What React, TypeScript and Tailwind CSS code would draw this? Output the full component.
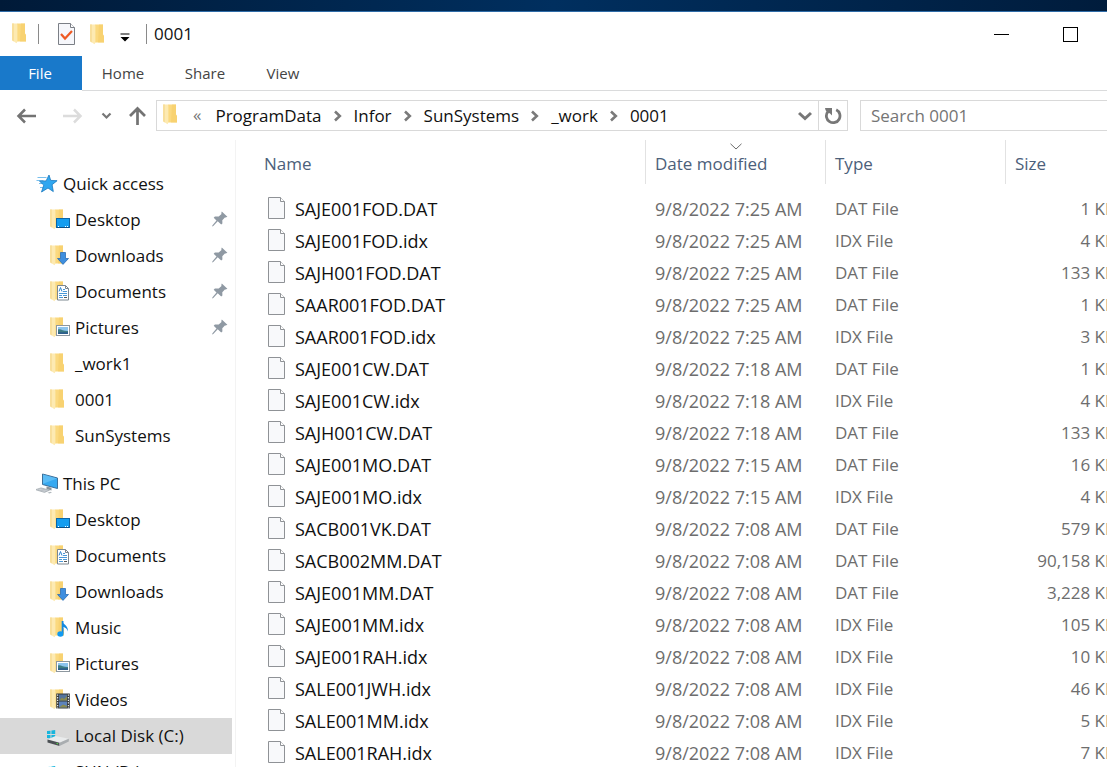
import type { ReactNode } from 'react';

type FileRow = { name: string; date: string; size: string };

const files: FileRow[] = [
  { name: 'SAJE001FOD.DAT', date: '9/8/2022 7:25 AM', size: '1 KB' },
  { name: 'SAJE001FOD.idx', date: '9/8/2022 7:25 AM', size: '4 KB' },
  { name: 'SAJH001FOD.DAT', date: '9/8/2022 7:25 AM', size: '133 KB' },
  { name: 'SAAR001FOD.DAT', date: '9/8/2022 7:25 AM', size: '1 KB' },
  { name: 'SAAR001FOD.idx', date: '9/8/2022 7:25 AM', size: '3 KB' },
  { name: 'SAJE001CW.DAT', date: '9/8/2022 7:18 AM', size: '1 KB' },
  { name: 'SAJE001CW.idx', date: '9/8/2022 7:18 AM', size: '4 KB' },
  { name: 'SAJH001CW.DAT', date: '9/8/2022 7:18 AM', size: '133 KB' },
  { name: 'SAJE001MO.DAT', date: '9/8/2022 7:15 AM', size: '16 KB' },
  { name: 'SAJE001MO.idx', date: '9/8/2022 7:15 AM', size: '4 KB' },
  { name: 'SACB001VK.DAT', date: '9/8/2022 7:08 AM', size: '579 KB' },
  { name: 'SACB002MM.DAT', date: '9/8/2022 7:08 AM', size: '90,158 KB' },
  { name: 'SAJE001MM.DAT', date: '9/8/2022 7:08 AM', size: '3,228 KB' },
  { name: 'SAJE001MM.idx', date: '9/8/2022 7:08 AM', size: '105 KB' },
  { name: 'SAJE001RAH.idx', date: '9/8/2022 7:08 AM', size: '10 KB' },
  { name: 'SALE001JWH.idx', date: '9/8/2022 7:08 AM', size: '46 KB' },
  { name: 'SALE001MM.idx', date: '9/8/2022 7:08 AM', size: '5 KB' },
  { name: 'SALE001RAH.idx', date: '9/8/2022 7:08 AM', size: '7 KB' },
];

function FolderShape() {
  return (
    <>
      <path d="M5 0.5h8v10l1 1.6v6.4H5z" fill="#fbd97f" />
      <path d="M9 .5h4v10l1 1.6v6.4H8z" fill="#f6cd68" opacity=".6" />
      <path d="M0 .5h5l.4 1.2v16.8l-.8 1.7L0 17.2z" fill="#fdeab2" />
      <path d="M0 .5h2v17.900L0 17.200z" fill="#f8df9c" />
    </>
  );
}

function Folder({ children }: { children?: ReactNode }) {
  return (
    <svg width="22" height="22" viewBox="0 0 22 22" aria-hidden="true" className="shrink-0">
      <FolderShape />
      {children}
    </svg>
  );
}

const DesktopIcon = () => (
  <Folder>
    <rect x="6.5" y="9.5" width="13" height="9" fill="#139df0" stroke="#0b66a8" />
    <path d="M7 18.5h12" stroke="#0a4f86" />
    <path d="M8 17.5h1M15 17.5h1M17 17.5h1" stroke="#fff" />
  </Folder>
);
const DownloadsIcon = () => (
  <Folder>
    <path d="M10.500 7.500h5v6h3L13 19.400 7.500 13.500h3z" fill="#3f8fdf" stroke="#2d6fb5" strokeWidth=".8" />
  </Folder>
);
const DocumentsIcon = () => (
  <Folder>
    <path d="M7.500 4.500h8l3 3v11.500h-11z" fill="#fff" stroke="#7c8790" />
    <path d="M15.500 4.500v3h3" fill="none" stroke="#7c8790" />
    <path d="M9 10.500l1.500-4 1.500 4" fill="none" stroke="#2f86cf" />
    <path d="M13 8.500h2M13 10.500h4M9 12.500h8M9 14.500h3M13 14.500h4M9 16.500h4" stroke="#4b98d6" />
    <path d="M14 16.500h3" stroke="#555" />
  </Folder>
);
const PicturesIcon = () => (
  <Folder>
    <rect x="6.500" y="8.500" width="13" height="10" fill="#fff" stroke="#8d979f" />
    <rect x="8" y="10" width="10" height="7" fill="#8cc4ee" />
    <path d="M8 12.500c3-.8 5 1.800 10 1.600V17H8z" fill="#3d7c83" />
    <path d="M8 15.500c3-.8 6 .2 10-.4V17H8z" fill="#2d5e8c" />
  </Folder>
);
const MusicIcon = () => (
  <Folder>
    <path d="M12.600 4v12.500" stroke="#1389e0" strokeWidth="1.800" />
    <path d="M12 4c.8 3.400 6.800 4.600 5.800 10.600-.3-2.600-2.600-4.400-5.800-5z" fill="#1389e0" />
    <ellipse cx="10.400" cy="17" rx="3.100" ry="2.800" fill="#119af2" />
  </Folder>
);
const VideosIcon = () => (
  <Folder>
    <rect x="6.300" y="4.500" width="13.500" height="15" fill="#34383d" />
    <rect x="9" y="5.500" width="8" height="6" fill="#55749c" />
    <rect x="9" y="12.500" width="8" height="6" fill="#5d83bb" />
    <path d="M9 11.500l3-3 2 1.500 3-3v4.500zM9 18.500l4-3 4 1.500v1.500z" fill="#8a8b50" />
    <path d="M7.600 5.500v14M18.400 5.500v14" stroke="#e9edf0" strokeWidth="1.200" strokeDasharray="1.300 1.300" />
  </Folder>
);
const DiskIcon = () => (
  <svg width="28" height="22" viewBox="0 0 28 22" aria-hidden="true" className="shrink-0">
    <path d="M0 6.100l3.500-.4v3.300H0zM4.400 5.600l3.800-.5V9H4.400zM0 9.900h3.500v3.500L0 13zM4.400 9.900h3.800V14l-3.800-.5z" fill="#17b5dd" />
    <path d="M.5 14.600L8.500 11l13.300 2.700-9.300 4z" fill="#e9ebec" />
    <path d="M.5 14.600l12 3.100v3.300L.5 17.500z" fill="#4b5054" />
    <path d="M12.500 17.700l9.300-4v2.900L12.500 21z" fill="#a9adb0" />
    <path d="M9.500 18.400l1.600.4" stroke="#5ae04a" />
  </svg>
);
const StarIcon = () => (
  <svg width="23" height="22" viewBox="0 0 23 22" aria-hidden="true" className="shrink-0">
    <path d="M1.500 4.500h9M.5 7.500h7M3 10.500h6M4 14.500h4" stroke="#55aee8" strokeWidth=".8" />
    <path d="M13 2l1.700 5.400 6.400.3-5 4 1.200 6.900-5.300-3.600-6.500 4 2.300-6.900-4.300-3.900 6.600-.3z" fill="#2fa7f0" stroke="#1877be" strokeWidth=".8" />
  </svg>
);
const PcIcon = () => (
  <svg width="24" height="22" viewBox="0 0 24 22" aria-hidden="true" className="shrink-0">
    <path d="M6.500 1l15 4v10.500L6.500 11.500z" fill="#37a9f0" stroke="#3d6f99" />
    <path d="M7 1.600l14 3.800-14 5.400z" fill="#6cc4f7" opacity=".7" />
    <path d="M10.500 13.400l5 1.400v2.600l-5-1.400z" fill="#8b959c" />
    <path d="M-.5 16.700l5.500-1.800 8.500 2.300-5 2.200z" fill="#d6dade" stroke="#9aa2a8" strokeWidth=".7" />
    <path d="M2 16.700l8 1.700M4.500 15.700l7 1.700" stroke="#a3aab0" strokeWidth=".6" />
    <path d="M11.500 19.800l2.800-1 1.700.6-2.600 1.200z" fill="#b1b8bd" />
  </svg>
);

function Pin() {
  return (
    <svg width="16" height="16" viewBox="0 0 16 16" aria-hidden="true" className="mb-0.5">
      <path d="M9.800.6l5.600 5.200-1.700.8-.8-.2-2.600 2.800.1 3.200-1.200 1.200-3.500-3.300-4.400 4.600L0 15.400l.5-1.100 4-4.700L1.700 6.800l1.200-1.200 3.800-.1 2.800-2.600-.2-1z" fill="#8f99a3" />
    </svg>
  );
}

type NavItem = { label: string; icon: ReactNode; pinned?: boolean; selected?: boolean };

const quickItems: NavItem[] = [
  { label: 'Desktop', icon: <DesktopIcon />, pinned: true },
  { label: 'Downloads', icon: <DownloadsIcon />, pinned: true },
  { label: 'Documents', icon: <DocumentsIcon />, pinned: true },
  { label: 'Pictures', icon: <PicturesIcon />, pinned: true },
  { label: '_work1', icon: <Folder /> },
  { label: '0001', icon: <Folder /> },
  { label: 'SunSystems', icon: <Folder /> },
];

const pcItems: NavItem[] = [
  { label: 'Desktop', icon: <DesktopIcon /> },
  { label: 'Documents', icon: <DocumentsIcon /> },
  { label: 'Downloads', icon: <DownloadsIcon /> },
  { label: 'Music', icon: <MusicIcon /> },
  { label: 'Pictures', icon: <PicturesIcon /> },
  { label: 'Videos', icon: <VideosIcon /> },
  { label: 'Local Disk (C:)', icon: <DiskIcon />, selected: true },
  { label: 'SUN (D:)', icon: <DiskIcon /> },
];

function NavGroup({ title, icon, items }: { title: string; icon: ReactNode; items: NavItem[] }) {
  return (
    <section>
      <a href="#" className="flex h-9 items-center pl-9">
        <span className="flex w-[27px]">{icon}</span>
        {title}
      </a>
      <ul>
        {items.map((item) => (
          <li key={item.label}>
            <a
              href="#"
              className={
                item.selected
                  ? 'mr-[3px] flex h-9 items-center bg-[#d9d9d9] pr-1 pl-[47px]'
                  : 'mr-[3px] flex h-9 items-center pr-1 pl-[47px]'
              }
            >
              <span className="flex w-7 justify-center">{item.icon}</span>
              <span className="flex-1">{item.label}</span>
              {item.pinned && <Pin />}
            </a>
          </li>
        ))}
      </ul>
    </section>
  );
}

function Chevron() {
  return (
    <svg width="10" height="12" viewBox="0 0 10 12" aria-hidden="true" className="shrink-0">
      <path d="M2 1.500L6.800 6 2 10.500" fill="none" stroke="#7a7a7a" strokeWidth="2.600" />
    </svg>
  );
}

function DocIcon() {
  return (
    <svg width="18" height="22" viewBox="0 0 18 22" aria-hidden="true" className="mb-0.5 shrink-0">
      <path d="M.5.5h12l4 4v17H.5z" fill="#f8f9fb" stroke="#8f9296" />
      <path d="M12.500.5v4h4" fill="#fff" stroke="#8f9296" />
    </svg>
  );
}

const crumbs = ['ProgramData', 'Infor', 'SunSystems', '_work', '0001'];

export default function App() {
  return (
    <div className="flex h-screen flex-col overflow-hidden bg-white font-['Open_Sans','Noto_Sans',sans-serif] text-[17px] leading-6 text-[#111]">
      <div className="h-3 shrink-0 border-b border-[#2f6ca8] bg-linear-to-r from-[#001a38] via-[#002f5f] to-[#001c3c]" />

      <header className="flex h-11 shrink-0 items-center pr-7 pl-3">
        <Folder />
        <span className="ml-1 h-5 w-px bg-[#8a8a8a]" />
        <button aria-label="Properties" className="ml-[19px]">
          <svg width="18" height="22" viewBox="0 0 18 22" aria-hidden="true">
            <path d="M.5.5h12l4 4v17H.5z" fill="#f6f7fb" stroke="#7b7f86" />
            <path d="M12.500.5v4h4" fill="#fff" stroke="#7b7f86" />
            <path d="M3 11l4 4.500 7-7.500" fill="none" stroke="#ee5a24" strokeWidth="2.200" />
          </svg>
        </button>
        <button aria-label="New folder" className="ml-3.5 pt-0.5">
          <Folder />
        </button>
        <button aria-label="Customize Quick Access Toolbar" className="ml-2 pt-1.5">
          <svg width="10" height="9" viewBox="0 0 10 9" aria-hidden="true">
            <path d="M.5 .5h9v1h-9zM.5 4h9L5 8.500z" fill="#000" />
          </svg>
        </button>
        <span className="ml-4 h-5 w-px bg-[#8a8a8a]" />
        <h1 className="ml-[7px] flex-1">0001</h1>
        <button aria-label="Minimize" className="flex w-[69px] justify-center">
          <svg width="15" height="15" viewBox="0 0 15 15" aria-hidden="true">
            <path d="M0 7.500h15" stroke="#000" />
          </svg>
        </button>
        <button aria-label="Maximize" className="-mr-[26px] flex w-[69px] justify-center">
          <svg width="15" height="15" viewBox="0 0 15 15" aria-hidden="true">
            <rect x=".5" y=".5" width="14" height="14" fill="none" stroke="#000" />
          </svg>
        </button>
      </header>

      <nav className="flex h-[35px] shrink-0 text-[15px] text-[#444]">
        <button className="mb-px w-[82px] bg-[#1979ca] pr-0.5 text-white">File</button>
        <div className="flex flex-1 border-b border-[#dadbdc]">
          <button className="w-[82px]">Home</button>
          <button className="w-[82px]">Share</button>
          <button className="w-[74px]">View</button>
        </div>
      </nav>

      <div className="flex h-[49px] shrink-0 items-center">
        <div className="flex w-[156px] shrink-0 items-center pl-4">
          <button aria-label="Back">
            <svg width="21" height="16" viewBox="0 0 21 16" aria-hidden="true">
              <path d="M20 8H2.500M9 1.500L2.500 8 9 14.500" fill="none" stroke="#737373" strokeWidth="2.500" />
            </svg>
          </button>
          <button aria-label="Forward" className="ml-[25px]">
            <svg width="21" height="16" viewBox="0 0 21 16" aria-hidden="true">
              <path d="M1 8h17.500M12 1.500L18.500 8 12 14.500" fill="none" stroke="#dcdcdc" strokeWidth="2.500" />
            </svg>
          </button>
          <button aria-label="Recent locations" className="ml-[18px]">
            <svg width="11" height="8" viewBox="0 0 11 8" aria-hidden="true">
              <path d="M1.500 1.500L5.500 5.500l4-4" fill="none" stroke="#777" strokeWidth="2.200" />
            </svg>
          </button>
          <button aria-label="Up" className="ml-4">
            <svg width="19" height="19" viewBox="0 0 19 19" aria-hidden="true">
              <path d="M9.500 19V2.500M2 10l7.500-7.500L17 10" fill="none" stroke="#737373" strokeWidth="2.700" />
            </svg>
          </button>
        </div>
        <div className="flex h-[31px] w-[692px] items-center border border-[#d9d9d9] pl-1.5">
          <span className="flex pb-0.5">
            <Folder />
          </span>
          <span className="ml-2 pb-0.5 text-[17px] leading-5 text-[#777]">«</span>
          <ol className="ml-3.5 flex flex-1 items-center">
            {crumbs.map((c, i) => (
              <li key={c} className="flex items-center">
                {i > 0 && (
                  <span className="mx-[11px] flex">
                    <Chevron />
                  </span>
                )}
                <a href="#">{c}</a>
              </li>
            ))}
          </ol>
          <button aria-label="Previous locations" className="mr-1.5">
            <svg width="14" height="10" viewBox="0 0 14 10" aria-hidden="true">
              <path d="M1 2l6 5.500L13 2" fill="none" stroke="#777" strokeWidth="3" />
            </svg>
          </button>
          <button aria-label="Refresh" className="flex h-full w-[29px] items-center justify-center border-l border-[#d9d9d9]">
            <svg width="18" height="18" viewBox="0 0 18 18" aria-hidden="true">
              <path d="M12.200 2.800A6.800 6.800 0 1 1 3.600 5" fill="none" stroke="#777" strokeWidth="2.800" />
              <path d="M1 1h7v7.500L5.800 6.300 3.500 6 1.500 3z" fill="#777" />
            </svg>
          </button>
        </div>
        <input
          type="search"
          aria-label="Search 0001"
          placeholder="Search 0001"
          className="ml-3 h-[31px] min-w-0 flex-1 border border-r-0 border-[#d9d9d9] px-2.5 outline-none placeholder:text-[#757575]"
        />
      </div>

      <div className="flex min-h-0 flex-1">
        <aside className="flex w-[235px] shrink-0 flex-col gap-3 overflow-hidden pt-[26px]">
          <NavGroup title="Quick access" icon={<StarIcon />} items={quickItems} />
          <NavGroup title="This PC" icon={<PcIcon />} items={pcItems} />
        </aside>
        <main className="min-w-0 flex-1 overflow-hidden border-l border-[#f3f3f3]">
          <table className="w-[890px] table-fixed border-collapse">
            <thead>
              <tr className="text-left text-[#4c607a]">
                <th className="w-[410px] p-0 pb-[9px] font-normal">
                  <div className="flex h-11 items-center border-r border-[#e2e2e2] pt-1 pl-7">Name</div>
                </th>
                <th aria-sort="descending" className="w-[180px] p-0 pb-[9px] font-normal">
                  <div className="relative flex h-11 items-center border-r border-[#e2e2e2] pt-1 pl-[9px]">
                    <svg width="12" height="7" viewBox="0 0 12 7" aria-hidden="true" className="absolute top-[3px] left-[84px]">
                      <path d="M.5.8L6 6 11.500.8" fill="none" stroke="#6a6a6a" />
                    </svg>
                    Date modified
                  </div>
                </th>
                <th className="w-[180px] p-0 pb-[9px] font-normal">
                  <div className="flex h-11 items-center border-r border-[#e2e2e2] pt-1 pl-[9px]">Type</div>
                </th>
                <th className="p-0 pb-[9px] font-normal">
                  <div className="flex h-11 items-center border-r border-[#e2e2e2] pt-1 pl-[9px]">Size</div>
                </th>
              </tr>
            </thead>
            <tbody className="text-[#6d6d6d]">
              {files.map((f) => (
                <tr key={f.name} className="h-8">
                  <td className="p-0 pl-8 text-lg leading-6 text-[#111]">
                    <div className="flex items-center gap-[9px]">
                      <DocIcon />
                      {f.name}
                    </div>
                  </td>
                  <td className="p-0 pl-[9px] text-lg leading-6">{f.date}</td>
                  <td className="p-0 pl-[9px]">{f.name.endsWith('.idx') ? 'IDX File' : 'DAT File'}</td>
                  <td className="p-0 pr-2.5 text-right">{f.size}</td>
                </tr>
              ))}
            </tbody>
          </table>
        </main>
      </div>
    </div>
  );
}
